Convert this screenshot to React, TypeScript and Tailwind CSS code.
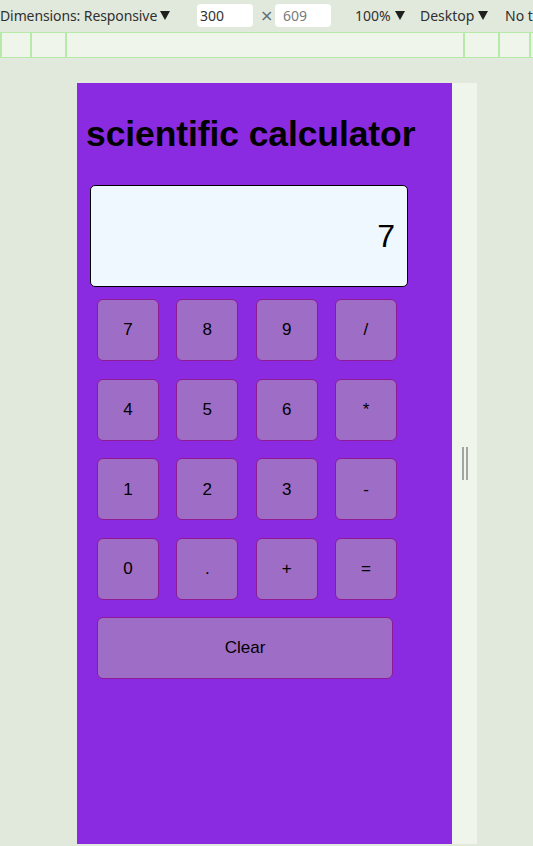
const keys = ['7', '8', '9', '/', '4', '5', '6', '*', '1', '2', '3', '-', '0', '.', '+', '='];

function Caret({ className = '' }: { className?: string }) {
  return (
    <svg viewBox="0 0 10 9" className={`h-[9px] w-[10px] ${className}`}>
      <path d="M0 0h10L5 9z" fill="#1f1f1f" />
    </svg>
  );
}

function Toolbar() {
  return (
    <div className="relative h-[32px] shrink-0 font-['Noto_Sans',sans-serif] text-[14px] text-[#303030]">
      <div className="absolute left-0 top-[5px] flex items-center gap-[3px]">
        <span className="tracking-[-0.1px]">Dimensions: Responsive</span>
        <Caret />
      </div>
      <div className="absolute left-[197px] top-[4px] flex h-[23px] w-[56px] items-center rounded-[4px] bg-white pl-[3px]">300</div>
      <span className="absolute left-[260px] top-[4px] font-['DejaVu_Sans',sans-serif] text-[16px] text-[#5a6b7a]">×</span>
      <div className="absolute left-[275px] top-[4px] flex h-[23px] w-[56px] items-center rounded-[4px] bg-white pl-[8px] text-[#7a7a7a]">609</div>
      <div className="absolute left-[355px] top-[5px] flex items-center gap-[4px]">
        <span>100%</span>
        <Caret />
      </div>
      <div className="absolute left-[420px] top-[5px] flex items-center gap-[4px]">
        <span>Desktop</span>
        <Caret />
      </div>
      <span className="absolute left-[505px] top-[5px] whitespace-nowrap">No t</span>
    </div>
  );
}

function Ruler() {
  return (
    <div className="flex h-[26px] shrink-0 border-y border-[#b6eaa9] bg-[#eff5ea]">
      <div className="w-[30px] border-l-2 border-[#b6eaa9]" />
      <div className="w-[35px] border-l-2 border-[#b6eaa9]" />
      <div className="w-[398px] border-l-2 border-[#b6eaa9]" />
      <div className="w-[35px] border-l-2 border-[#b6eaa9]" />
      <div className="w-[31px] border-l-2 border-[#b6eaa9]" />
      <div className="flex-1 border-l-2 border-[#b6eaa9]" />
    </div>
  );
}

function Calculator() {
  return (
    <div className="flex h-[761px] w-[375px] flex-col bg-[#8a2be2] font-['Liberation_Sans',Arial,sans-serif] text-black">
      <h1 className="mt-[31px] pl-[9px] text-[35.5px] font-bold leading-[40px] tracking-[-0.1px]">scientific calculator</h1>
      <div className="ml-[13px] mt-[31px] flex h-[102px] w-[318px] items-center justify-end rounded-[5px] border border-black bg-[#f0f8ff] pr-[12px] text-[32px]">
        7
      </div>
      <div className="ml-[20px] mt-[12px] grid w-fit grid-cols-[repeat(4,62px)] gap-x-[17.33px] gap-y-[17.67px]">
        {keys.map((k) => (
          <button
            key={k}
            type="button"
            className="flex h-[62px] w-[62px] items-center justify-center rounded-[6px] border border-[#8d1b95] bg-[#9e6dc6] text-[17px]"
          >
            {k}
          </button>
        ))}
      </div>
      <button
        type="button"
        className="ml-[20px] mt-[17px] flex h-[62px] w-[296px] items-center justify-center rounded-[6px] border border-[#8d1b95] bg-[#9e6dc6] text-[17px]"
      >
        Clear
      </button>
    </div>
  );
}

export default function App() {
  return (
    <div className="flex h-[846px] w-[533px] flex-col overflow-hidden bg-[#e1e9dd]">
      <Toolbar />
      <Ruler />
      <div className="flex pl-[77px] pt-[25px]">
        <Calculator />
        <div className="flex h-[761px] w-[25px] items-center justify-center gap-[2px] bg-[#eff5ea]">
          <div className="h-[33px] w-[2px] bg-[#a3a3a3]" />
          <div className="h-[33px] w-[2px] bg-[#a3a3a3]" />
        </div>
      </div>
    </div>
  );
}
